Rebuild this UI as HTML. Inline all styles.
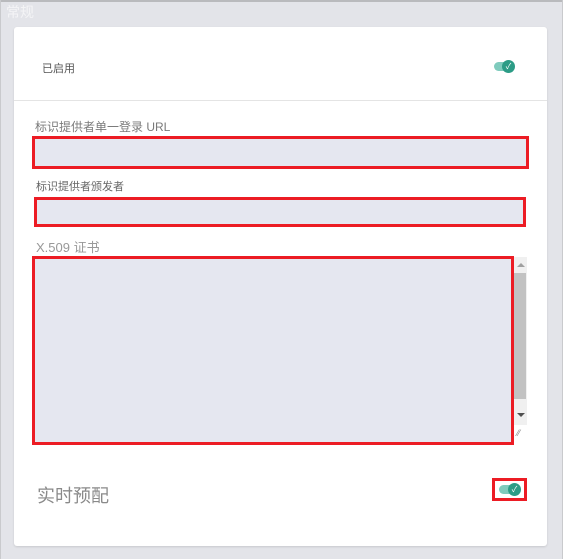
<!DOCTYPE html>
<html><head><meta charset="utf-8"><style>
*{margin:0;padding:0;box-sizing:border-box}
body{width:563px;height:559px;background:#e3e4e9;position:relative;overflow:hidden;font-family:"Liberation Sans","Noto Sans CJK SC",sans-serif}
.a{position:absolute}
.t{color:#7a7a7a;white-space:nowrap}
.red{border:3px solid #ec1c24;background:#e5e7f0}
</style></head><body>
<div class="a" style="left:0;top:0;width:563px;height:2px;background:#b9babd"></div>
<div class="a" style="left:0;top:0;width:1px;height:559px;background:#c9cacd"></div>
<div class="a" style="right:0;top:0;width:1px;height:559px;background:#c9cacd"></div>
<div class="a t" style="left:6px;top:2px;font-size:14px;color:#f4f4f6">常规</div>
<div class="a" style="left:14px;top:27px;width:533px;height:519px;background:#fff;border-radius:3px;box-shadow:0 1px 2px rgba(0,0,0,.12)"></div>
<div class="a t" style="left:42px;top:60px;font-size:11px;color:#555">已启用</div>
<div class="a" style="left:494px;top:62px;width:18px;height:9px;border-radius:5px;background:#7fcbbd"></div>
<div class="a" style="left:502px;top:60px;width:13px;height:13px;border-radius:50%;background:#2c9c86;color:#fff;font-size:8px;text-align:center;line-height:13px">✓</div>
<div class="a" style="left:14px;top:100px;width:533px;height:1px;background:#e4e4e4"></div>
<div class="a t" style="left:35px;top:118px;font-size:12px">标识提供者单一登录 URL</div>
<div class="a red" style="left:32px;top:136px;width:497px;height:33px"></div>
<div class="a t" style="left:36px;top:178px;font-size:11px;color:#666">标识提供者颁发者</div>
<div class="a red" style="left:34px;top:197px;width:492px;height:30px"></div>
<div class="a t" style="left:36px;top:237px;font-size:13px;color:#999">X.509 证书</div>
<div class="a red" style="left:32px;top:256px;width:482px;height:189px"></div>
<div class="a" style="left:514px;top:257px;width:13px;height:168px;background:#f0f0f0"></div>
<div class="a" style="left:514px;top:273px;width:12px;height:126px;background:#c2c2c2"></div>
<div class="a" style="left:517px;top:263px;width:0;height:0;border-left:4px solid transparent;border-right:4px solid transparent;border-bottom:4px solid #a0a0a0"></div>
<div class="a" style="left:517px;top:413px;width:0;height:0;border-left:4px solid transparent;border-right:4px solid transparent;border-top:4px solid #505050"></div>
<div class="a t" style="left:517px;top:428px;font-size:9px;color:#888">⁄⁄</div>
<div class="a t" style="left:37px;top:482px;font-size:18px;color:#8a8a8a">实时预配</div>
<div class="a" style="left:492px;top:478px;width:35px;height:23px;border:3px solid #ec1c24"></div>
<div class="a" style="left:499px;top:485px;width:18px;height:9px;border-radius:5px;background:#7fcbbd"></div>
<div class="a" style="left:508px;top:483px;width:13px;height:13px;border-radius:50%;background:#2c9c86;color:#fff;font-size:8px;text-align:center;line-height:13px">✓</div>
</body></html>
